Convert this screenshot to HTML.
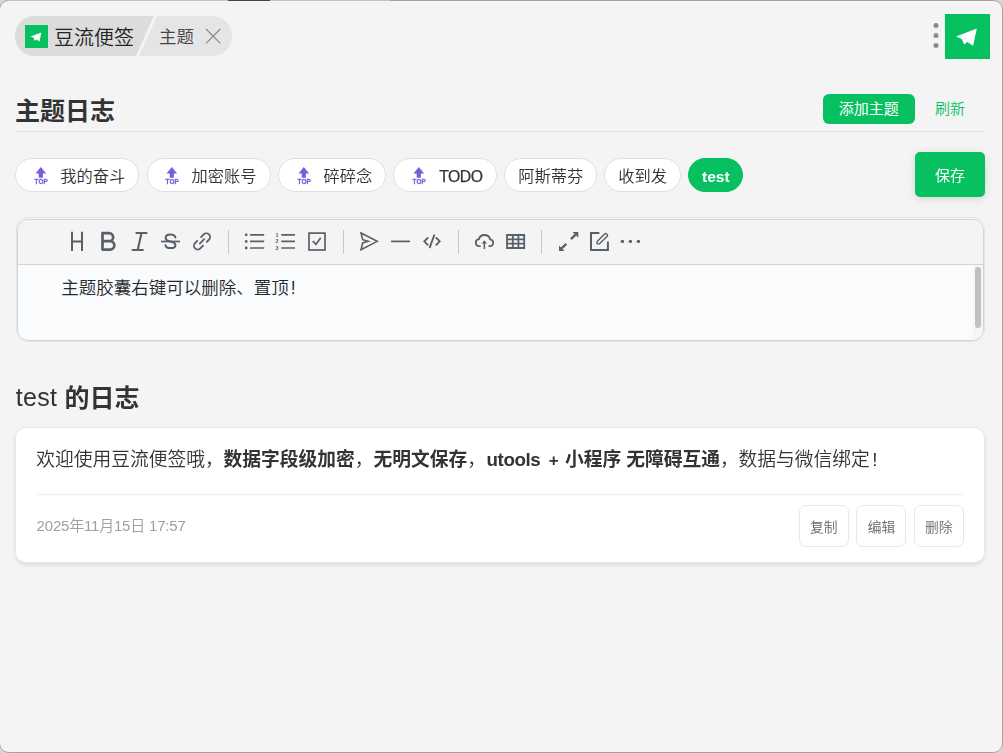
<!DOCTYPE html>
<html lang="zh-CN">
<head>
<meta charset="utf-8">
<title>豆流便签</title>
<style>
*{box-sizing:border-box;margin:0;padding:0}
html,body{width:1003px;height:753px;overflow:hidden;background:#d6d6d6}
body{font-family:"Liberation Sans","Noto Sans CJK SC",sans-serif;color:#333;position:relative}
.win{position:absolute;left:0;top:0;width:1003px;height:753px;background:#f4f4f4;overflow:hidden}
.frame{position:absolute;left:-1px;top:0;width:1004px;height:753px;border:1px solid #a3a3a3;border-radius:9.5px;pointer-events:none;box-shadow:0 0 0 12px #d6d6d6}
.abs{position:absolute}
.t{position:absolute;white-space:nowrap;line-height:1;font-weight:350}
.t b{font-weight:700}
.pill{position:absolute;left:15px;top:16px;width:217px;height:40px;border-radius:20px;background:#e5e5e5;overflow:hidden}
.pill svg{left:0;top:0}
.logo{position:absolute;background:#07c160}
.green{background:#07c160;color:#fff}
.btn{position:absolute;border-radius:6px}
.tag{position:absolute;top:158px;height:34px;border-radius:17px;background:#fff;border:1px solid #e0e0e0}
.tag.on{background:#07c160;border-color:#07c160}
.hr{position:absolute;height:1px;background:#e0e0e0}
.ed{position:absolute;left:16px;top:217px;width:969px;height:125px;border:1px solid #e2e3e4;border-radius:12.5px;background:#f4f4f4;overflow:hidden}
.ed .in{position:absolute;left:0;top:1px;right:0;bottom:0;border:1px solid #d1d5da;border-radius:11.5px;background:#fafbfc;overflow:hidden}
.ed .tb{position:absolute;left:0;top:0;right:0;height:45px;background:#f4f4f4;border-bottom:1px solid #d1d5da}
.ed .track{position:absolute;right:0;top:45px;width:10px;bottom:0;background:#f5f5f5}
.ed .thumb{position:absolute;right:2px;top:47px;width:6px;height:61px;border-radius:3px;background:#c1c1c1}
.card{position:absolute;left:15px;top:427px;width:970px;height:136px;background:#fff;border-radius:11px;border:1px solid #e6e6e6;box-shadow:0 3px 5px -1px rgba(0,0,0,.11)}
.c{top:451px;font-size:18.75px;color:#333}
.sb{position:absolute;border:1px solid #e8e8e8;border-radius:7px;background:#fff;width:50px;height:42px;top:505px}
svg{position:absolute;overflow:visible}
.top{will-change:transform}
.top text{font-family:"Liberation Sans",sans-serif;font-weight:bold;font-size:7.9px;fill:#7b5cd6;stroke:#7b5cd6;stroke-width:.3px}
</style>
</head>
<body>
<div class="win">
  <!-- top bar -->
  <div class="pill"><svg width="217" height="40" viewBox="0 0 217 40"><path d="M0 0 H139 L121 40 H0 Z" fill="#dcdcdc"/><path d="M139 0 H142 L124 40 H121 Z" fill="#f4f4f4"/></svg></div>
  <div class="logo" style="left:25px;top:25px;width:23px;height:23px"></div>
  <svg style="left:25px;top:25px" width="23" height="23" viewBox="0 0 23 23"><path d="M5.6 11.6 L16.4 7.4 L14.5 16.4 L11.4 14.5 L9.8 15.8 L8.6 12.8 Z" fill="#fff"/></svg>
  <div class="t" id="t1" style="left:54px;top:27.5px;font-size:20px;color:#222">豆流便签</div>
  <div class="t" id="t2" style="left:159px;top:29px;font-size:17.5px;color:#444">主题</div>
  <svg style="left:206px;top:29px" width="14" height="14" viewBox="0 0 14 14"><path d="M0 0 L14.3 14.3 M14.3 0 L0 14.3" stroke="#888" stroke-width="1.2" fill="none"/></svg>
  <svg style="left:923px;top:5px" width="80" height="60" viewBox="0 0 80 60"><circle cx="13" cy="20.5" r="2.5" fill="#8b8b8b"/><circle cx="13" cy="30.5" r="2.5" fill="#8b8b8b"/><circle cx="13" cy="40.4" r="2.5" fill="#8b8b8b"/><rect x="22" y="9" width="45" height="45" fill="#07c160"/><path d="M33.1 31.5 L53.8 23.4 L50.1 40.8 L44.3 37.1 L41.1 39.6 L38.8 33.9 Z" fill="#fff"/></svg>

  <!-- heading -->
  <div class="t" id="t3" style="left:15px;top:98.5px;font-size:25px;font-weight:bold;color:#333">主题日志</div>
  <div class="hr" style="left:15px;top:131px;width:970px"></div>
  <div class="btn green" style="left:823px;top:94px;width:92px;height:30px"></div>
  <div class="t" id="t4" style="left:838.7px;top:101px;font-size:15px;color:#fff;font-weight:400">添加主题</div>
  <div class="t" id="t5" style="left:935px;top:101px;font-size:15px;color:#07c160">刷新</div>

  <!-- tags -->
  <div class="tag" style="left:15px;width:124px"></div>
  <div class="tag" style="left:147px;width:124px"></div>
  <div class="tag" style="left:278px;width:108px"></div>
  <div class="tag" style="left:393px;width:104px"></div>
  <div class="tag" style="left:504px;width:93px"></div>
  <div class="tag" style="left:604px;width:77px"></div>
  <div class="tag on" style="left:688px;width:55px"></div>
  <svg class="top" style="left:30.7px;top:165px" width="20" height="22" viewBox="0 0 20 22"><path d="M9.8 2 L15.1 8.5 H11.9 V12.8 H7.7 V8.5 H4.5 Z" fill="#7b5cd6"/><text x="3.6" y="19.3" textLength="13.1" lengthAdjust="spacingAndGlyphs">TOP</text></svg>
  <svg class="top" style="left:162.4px;top:165px" width="20" height="22" viewBox="0 0 20 22"><path d="M9.8 2 L15.1 8.5 H11.9 V12.8 H7.7 V8.5 H4.5 Z" fill="#7b5cd6"/><text x="3.6" y="19.3" textLength="13.1" lengthAdjust="spacingAndGlyphs">TOP</text></svg>
  <svg class="top" style="left:293.8px;top:165px" width="20" height="22" viewBox="0 0 20 22"><path d="M9.8 2 L15.1 8.5 H11.9 V12.8 H7.7 V8.5 H4.5 Z" fill="#7b5cd6"/><text x="3.6" y="19.3" textLength="13.1" lengthAdjust="spacingAndGlyphs">TOP</text></svg>
  <svg class="top" style="left:408.9px;top:165px" width="20" height="22" viewBox="0 0 20 22"><path d="M9.8 2 L15.1 8.5 H11.9 V12.8 H7.7 V8.5 H4.5 Z" fill="#7b5cd6"/><text x="3.6" y="19.3" textLength="13.1" lengthAdjust="spacingAndGlyphs">TOP</text></svg>
  <div class="t" id="g1" style="left:60.3px;top:168px;font-size:16.25px">我的奋斗</div>
  <div class="t" id="g2" style="left:191.6px;top:168px;font-size:16.25px">加密账号</div>
  <div class="t" id="g3" style="left:323.4px;top:168px;font-size:16.25px">碎碎念</div>
  <div class="t" id="g4" style="left:439.3px;top:169px;font-size:15.8px;letter-spacing:-0.55px;font-weight:400;-webkit-text-stroke:.25px #333">TODO</div>
  <div class="t" id="g5" style="left:518.2px;top:168px;font-size:16.25px">阿斯蒂芬</div>
  <div class="t" id="g6" style="left:618.2px;top:168px;font-size:16.25px">收到发</div>
  <div class="t" id="g7" style="left:702px;top:168.6px;font-size:15.5px;color:#fff;font-weight:bold">test</div>
  <div class="btn green" style="left:915px;top:152px;width:70px;height:45px;border-radius:5px;box-shadow:0 2px 9px rgba(0,0,0,.13)"></div>
  <div class="t" id="t6" style="left:935px;top:168px;font-size:15px;color:#fff;font-weight:400">保存</div>

  <!-- editor -->
  <div class="ed"><div class="in"><div class="tb"></div><div class="track"></div><div class="thumb"></div></div></div>
  <div class="t" id="t7" style="left:61.2px;top:280px;font-size:17.5px;color:#24292e">主题胶囊右键可以删除、置顶<span style="margin-left:2px">!</span></div>

  <svg class="ico" style="left:0;top:0" width="1003" height="753" viewBox="0 0 1003 753" fill="none" stroke="#586069" stroke-linecap="butt" stroke-linejoin="miter">
    <g stroke="none" fill="#c4c8cc"><rect x="228" y="230" width="1" height="24"/><rect x="343" y="230" width="1" height="24"/><rect x="458" y="230" width="1" height="24"/><rect x="541" y="230" width="1" height="24"/></g>
    <!-- H -->
    <path d="M72 231.8 V251 M82 231.8 V251 M72 241.6 H82" stroke-width="2"/>
    <!-- B -->
    <path d="M102.5 241.1 H110.1 a4.25 4.25 0 0 1 0 8.5 H102.5 V233.2 H109.2 a3.95 3.95 0 0 1 0 7.9" stroke-width="2.7" stroke-linejoin="round"/>
    <!-- I -->
    <path d="M136.4 233 H146.6 M132.6 250 H142.8 M141.5 233 L137.7 250" stroke-width="2.1" stroke-linecap="round"/>
    <!-- S -->
    <path d="M161 241.5 H180" stroke-width="1.7"/>
    <path d="M175.4 237.6 C174.9 235.5 173 234.6 170.5 234.6 C167.6 234.6 165.6 235.9 165.6 237.9 C165.6 239.8 167.3 240.8 170.4 241.5 C173.6 242.2 175.4 243.3 175.4 245.2 C175.4 247.2 173.4 248.1 170.5 248.1 C167.7 248.1 165.8 247 165.4 245.2" stroke-width="2" stroke-linecap="round"/>
    <!-- link -->
    <g transform="translate(202 241.4) rotate(-45)" stroke-width="1.85" stroke-linecap="round"><path d="M2.4 -3.75 H6.1 a3.75 3.75 0 0 1 0 7.5 H3"/><path d="M-2.4 3.75 H-6.1 a3.75 3.75 0 0 1 0 -7.5 H-3"/><path d="M-3.1 0 H3.1"/></g>
    <!-- list -->
    <g stroke-width="1.7"><path d="M250 234.8 H264.2 M250 241.4 H264.2 M250 248 H264.2"/></g>
    <g stroke="none" fill="#586069"><circle cx="246.2" cy="234.8" r="1.4"/><circle cx="246.2" cy="241.4" r="1.4"/><circle cx="246.2" cy="248" r="1.4"/></g>
    <!-- ordered list -->
    <g stroke-width="1.7"><path d="M281.3 234.8 H295 M281.3 241.4 H295 M281.3 248 H295"/></g>
    
    <!-- check -->
    <rect x="309" y="233.1" width="16" height="16.9" stroke-width="1.7"/>
    <path d="M312.8 241 L315.9 244.4 L320.7 237.8" stroke-width="1.7"/>
    <!-- quote / plane -->
    <path d="M361 233 L377.2 241.35 L361 249.7 L362.7 243 L368.2 241.35 L362.7 239.7 Z" stroke-width="1.6" stroke-linejoin="miter" stroke-miterlimit="6"/>
    <!-- line -->
    <path d="M391 241.4 H410" stroke-width="1.7"/>
    <!-- code -->
    <path d="M427.7 237.9 L424.3 241.35 L427.7 244.8 M436.3 237.9 L439.7 241.35 L436.3 244.8 M434.2 235.3 L429.8 247.4" stroke-width="1.85" stroke-linecap="round"/>
    <!-- upload -->
    <path d="M479.9 246.2 C477.2 246.1 475.8 244.6 475.8 242.7 C475.8 240.8 477.1 239.5 478.9 239.2 C479.5 236.7 481.7 235 484.5 235 C487.3 235 489.5 236.8 490.1 239.3 C491.9 239.6 493.2 240.9 493.2 242.7 C493.2 244.7 491.8 246.1 489.2 246.2" stroke-width="1.8" stroke-linecap="round"/>
    <path d="M484.35 249 V242.8" stroke-width="1.5"/><path d="M484.35 240.3 L487 243.5 H481.7 Z" stroke="none" fill="#586069"/>
    <!-- table -->
    <path d="M507 235 H524.2 V248 H507 Z M507 239.3 H524.2 M507 243.7 H524.2 M512.8 235 V248 M518.4 235 V248" stroke-width="1.8"/>
    <!-- fullscreen -->
    <path d="M570.9 239.1 L575.6 234.6 M566.3 243.8 L561.6 248.3" stroke-width="2.3"/>
    <path d="M572.6 232 H578.3 V237.7 Z M559 245.4 V251 H564.6 Z" stroke="none" fill="#586069"/>
    <!-- edit -->
    <path d="M599.3 233.1 H591 V250 H607.9 V241.6" stroke-width="2"/>
    <g transform="translate(602.1 238.9) rotate(-45)"><path d="M-5.3 -1.7 H5.6 a1 1 0 0 1 1 1 V0.7 a1 1 0 0 1 -1 1 H-5.3 L-7 0 Z" stroke-width="1.4" stroke-linejoin="round"/></g>
    <!-- more -->
    <g stroke="none" fill="#586069"><circle cx="622.4" cy="241.4" r="1.7"/><circle cx="630.4" cy="241.4" r="1.7"/><circle cx="638.4" cy="241.4" r="1.7"/></g>
  </svg>

  <svg style="left:275px;top:230px;will-change:transform" width="6" height="22" viewBox="0 0 12 44" font-family="Liberation Sans, sans-serif" font-weight="bold" font-size="11" fill="#586069"><text x="1" y="13.6">1</text><text x="1" y="26.8">2</text><text x="1" y="40">3</text></svg>

  <!-- log heading -->
  <div class="t" id="t8" style="left:15.8px;top:385.3px;font-size:25px;color:#333;letter-spacing:.25px">test</div>
  <div class="t" id="t8b" style="left:64.6px;top:386px;font-size:25px;color:#333"><b>的日志</b></div>

  <!-- card -->
  <div class="card"></div>
  <div class="t c" id="c1" style="left:36.3px">欢迎使用豆流便签哦，</div>
  <div class="t c" id="c2" style="left:223.6px"><b>数据字段级加密</b>，</div>
  <div class="t c" id="c3" style="left:373.6px"><b>无明文保存</b>，</div>
  <div class="t c" id="c4" style="left:486.6px;letter-spacing:-0.45px"><b>utools</b></div>
  <div class="t c" id="c5" style="left:548.8px;top:451.9px;font-size:17px"><b>+</b></div>
  <div class="t c" id="c6" style="left:564.9px"><b>小程序 无障碍互通</b>，</div>
  <div class="t c" id="c7" style="left:738.6px">数据与微信绑定<span style="margin-left:2.5px">!</span></div>
  <div class="hr" style="left:36px;top:494px;width:928px;background:#eee"></div>
  <div class="t" id="t10" style="left:36.6px;top:518px;font-size:15px;letter-spacing:-0.2px;color:#a0a0a0">2025年11月15日 17:57</div>
  <div class="sb" style="left:799px"></div>
  <div class="sb" style="left:856px"></div>
  <div class="sb" style="left:914px"></div>
  <div class="t" id="b1" style="left:810px;top:520.7px;font-size:13.75px;color:#666">复制</div>
  <div class="t" id="b2" style="left:867.7px;top:520.7px;font-size:13.75px;color:#666">编辑</div>
  <div class="t" id="b3" style="left:925px;top:520.7px;font-size:13.75px;color:#666">删除</div>
</div>
<div class="frame"></div>
<div class="abs" style="left:228px;top:0;width:42px;height:1px;background:#444"></div>
<div class="abs" style="left:8px;top:0;width:220px;height:1px;background:#c4c4c4"></div>
<div class="abs" style="left:270px;top:0;width:120px;height:1px;background:#c4c4c4"></div>
<div class="abs" style="left:1002px;top:644px;width:1px;height:22px;background:#7dba6c"></div>
</body>
</html>
